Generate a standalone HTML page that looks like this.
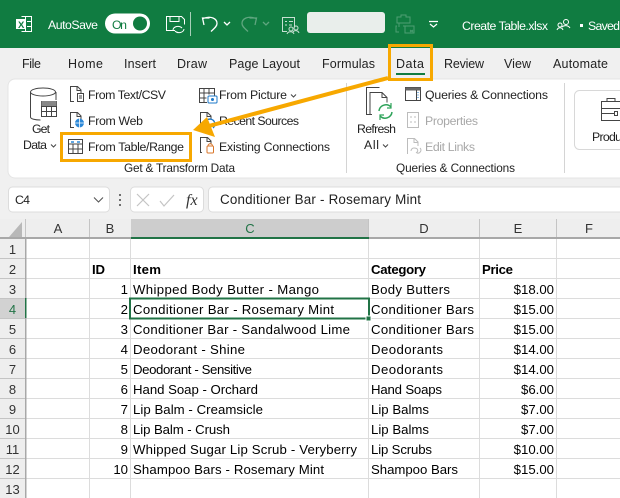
<!DOCTYPE html>
<html><head><meta charset="utf-8"><style>
html,body{margin:0;padding:0;background:#fff;width:620px;height:498px;overflow:hidden}
svg{display:block}
text{font-family:"Liberation Sans",sans-serif;font-size:12.3px;fill:#222;white-space:pre}
.t text{fill:#fff}
.cell text{fill:#000;font-size:13.2px}
.hd text{font-size:13px;fill:#333}
.tab text{font-size:12.5px}
.f{font-size:13.400px}
.b{font-weight:bold}
.g{fill:#a8a8a8}
.i{fill:none;stroke:#444;stroke-width:1}
</style></head><body>
<svg xmlns="http://www.w3.org/2000/svg" width="620" height="498" viewBox="0 0 620 498">
<rect width="620" height="220" fill="#f0f0f0"/>
<rect width="620" height="48" fill="#107c41"/>
<!-- title bar -->
<g fill="none" stroke="#fff" stroke-width="1">
<path d="M21.500 16.500h10v15h-10M25.500 16.500v15M27 21.500h4.500M27 26.500h4.500"/>
</g>
<rect x="16" y="19" width="10" height="10" fill="#fff"/>
<text x="18" y="28" style="font-size:9.500px;font-weight:bold;fill:#107c41">X</text>
<g class="t">
<text x="48" y="29" textLength="50" lengthAdjust="spacing">AutoSave</text>
<text x="462" y="30" textLength="86" lengthAdjust="spacing">Create Table.xlsx</text>
<text x="588" y="30" textLength="32" lengthAdjust="spacing">Saved</text>
</g>
<rect x="105" y="13.500" width="45" height="20" rx="10" fill="#fff"/>
<circle cx="140" cy="23.500" r="7" fill="#107c41"/>
<text x="112" y="29" textLength="15" lengthAdjust="spacing" style="fill:#107c41">On</text>
<g fill="none" stroke="#fff" stroke-width="1">
<path d="M175 30.500h-8.500v-14h15l3 3v5M170 16.500v5h9v-5"/>
<path d="M173 30a5 4 0 0 1 9-2M184 29a5 4 0 0 1-9 2"/>
</g>
<rect x="190" y="12" width="1" height="24" fill="#a8cfb8"/>
<g fill="none" stroke="#fff" stroke-width="1.300">
<path d="M204 25l-1.500-7 7 0M203 18.500c8-3 14 0 14 5 0 3-3 5-6 8"/>
<path d="M224 22l3 3 3-3"/>
</g>
<g fill="none" stroke="#5fa67f" stroke-width="1.300">
<path d="M255 25l1.500-7-7 0M256 18.500c-8-3-14 0-14 5 0 3 3 5 6 8"/>
<path d="M263 22l3 3 3-3"/>
</g>
<g fill="none" stroke="#c7e0d2" stroke-width="1">
<path d="M287 31.500h-4.500v-14h12v10M285 21.500h2M289 21.500h4M285 25h2M289 25h3"/>
<circle cx="291" cy="29" r="2"/><circle cx="296" cy="28" r="2"/><path d="M287 34c1-3 6-3 7 0M293 32c1-2 5-2 6 1"/>
</g>
<rect x="307" y="12" width="78" height="21" rx="3" fill="#e9eeeb"/>
<g fill="none" stroke="#4e9e73" stroke-width="1">
<path d="M397 23v-6h4v-2h5v2h4v6zM397 26h-1v6h3M403 26h11v7h-9v-7M399 23v4"/>
<path d="M410 30l3 2M413 30l-3 2"/>
</g>
<path d="M429 21.500h9M430 24l3.500 3 3.500-3" fill="none" stroke="#fff" stroke-width="1.200"/>
<g fill="none" stroke="#fff" stroke-width="1">
<circle cx="566" cy="22" r="2.500"/><circle cx="560" cy="25" r="2"/><path d="M557 30c1-3 5-3 6 0M562 27c2-2 6-2 8 1"/>
</g>
<rect x="580" y="24" width="3" height="3" fill="#fff"/>
<!-- tabs -->
<g class="tab">
<text x="22" y="68" textLength="19" lengthAdjust="spacing">File</text>
<text x="68" y="68" textLength="35" lengthAdjust="spacing">Home</text>
<text x="124" y="68" textLength="32" lengthAdjust="spacing">Insert</text>
<text x="177" y="68" textLength="30" lengthAdjust="spacing">Draw</text>
<text x="229" y="68" textLength="71" lengthAdjust="spacing">Page Layout</text>
<text x="322" y="68" textLength="53" lengthAdjust="spacing">Formulas</text>
<text x="396" y="68" textLength="28" lengthAdjust="spacing">Data</text>
<text x="444" y="68" textLength="40" lengthAdjust="spacing">Review</text>
<text x="504" y="68" textLength="27" lengthAdjust="spacing">View</text>
<text x="553" y="68" textLength="55" lengthAdjust="spacing">Automate</text>
</g>
<rect x="396" y="73" width="29" height="2" fill="#107c41"/>
<!-- ribbon -->
<rect x="8" y="79" width="640" height="99" rx="7" fill="#fff" stroke="#e4e4e4"/>
<rect x="346" y="83" width="1" height="90" fill="#d4d4d4"/>
<rect x="564" y="83" width="1" height="90" fill="#d4d4d4"/>
<rect x="574.500" y="90.500" width="70" height="59" rx="5" fill="#fff" stroke="#d8d8d8"/>
<!-- Get Data icon -->
<g class="i">
<path d="M30.500 92v25c0 2 5 3 10 3M56 92v8"/>
<ellipse cx="43" cy="92" rx="12.500" ry="4"/>
<rect x="41.500" y="101.500" width="15" height="15" fill="#fff"/>
<path d="M41.500 106.500h15M41.500 111.500h15M46.500 101.500v15M51.500 101.500v15"/>
</g>
<rect x="41.500" y="101" width="15" height="5" fill="#888"/>
<text x="32" y="133" textLength="18" lengthAdjust="spacing">Get</text>
<text x="23" y="149" textLength="24" lengthAdjust="spacing">Data</text>
<path d="M51 144.500l2.500 2.500 2.500-2.500" fill="none" stroke="#444"/>
<!-- From Text -->
<g class="i">
<path d="M74 101.500h-3.500v-15h7l3.500 3.500v3M77 86.500v4h4"/>
<rect x="77.500" y="93.500" width="6" height="8"/>
<path d="M79 96h3M79 98h3"/>
<path d="M74 127.500h-3.500v-15h7l3.500 3.500v3M77 112.500v4h4"/>
</g>
<circle cx="79.500" cy="123" r="4.500" fill="#2b88d8"/>
<path d="M75 123h9M79.500 118.500v9" stroke="#fff" stroke-width=".8"/>
<text x="88" y="99" textLength="78" lengthAdjust="spacing">From Text/CSV</text>
<text x="88" y="125" textLength="55" lengthAdjust="spacing">From Web</text>
<!-- From table -->
<g class="i">
<rect x="68.500" y="139.500" width="14" height="14"/>
<path d="M68.500 144h14M68.500 149h14M73 144v9.500M78 144v9.500"/>
</g>
<path d="M71 142h3M77 142h3" stroke="#2b88d8" stroke-width="1.500"/>
<text x="88" y="151" textLength="96" lengthAdjust="spacing">From Table/Range</text>
<!-- From picture -->
<g class="i">
<path d="M207 102.500h-7.500v-14h15v7M199.500 93h15M199.500 98h7M204 88.500v14M209 88.500v6"/>
</g>
<rect x="208" y="96" width="9" height="7" rx="1" fill="none" stroke="#1e78c8"/>
<circle cx="212.500" cy="99.500" r="1.500" fill="#1e78c8"/>
<text x="219" y="99" textLength="68" lengthAdjust="spacing">From Picture</text>
<path d="M291 94.500l2.500 2.500 2.500-2.500" fill="none" stroke="#444"/>
<g class="i">
<path d="M204 127.500h-3.500v-15h7l3.500 3.500v3M207 112.500v4h4"/>
<path d="M202 152.500h-1.500v-15h7l3.500 3.500v3M207 137.500v4h4"/>
</g>
<path d="M205 125a5 5 0 1 1 8 3" fill="none" stroke="#1e78c8" stroke-width="1.300"/>
<rect x="207" y="146" width="6.500" height="7" rx="1" fill="none" stroke="#d9762a"/>
<path d="M208 146c0-3 4.500-3 4.500 0" fill="none" stroke="#d9762a"/>
<text x="219" y="125" textLength="80" lengthAdjust="spacing">Recent Sources</text>
<text x="219" y="151" textLength="111" lengthAdjust="spacing">Existing Connections</text>
<text x="124" y="172" textLength="111" lengthAdjust="spacing" style="font-size:11.800px">Get &amp; Transform Data</text>
<!-- Refresh -->
<g class="i">
<path d="M370 114.500h-3.500v-27h13M372 114.500h-2V92.500h12l5 5v5M382 92.500v5h5"/>
</g>
<path d="M379 111a7 7 0 0 1 12-4M392 112a7 7 0 0 1-12 4" fill="none" stroke="#2fa35a" stroke-width="1.500"/>
<path d="M391 103v5h-4M380 120v-5h4" fill="none" stroke="#2fa35a" stroke-width="1.200"/>
<text x="357" y="133" textLength="39" lengthAdjust="spacing">Refresh</text>
<text x="364" y="149" textLength="15" lengthAdjust="spacing">All</text>
<path d="M383 144.500l2.500 2.500 2.500-2.500" fill="none" stroke="#444"/>
<!-- Queries -->
<rect x="405.500" y="87.500" width="15" height="13" fill="none" stroke="#444"/>
<rect x="405.500" y="87.500" width="15" height="3" fill="#666"/>
<path d="M416.500 90v10" stroke="#444"/>
<path d="M418 92v1M418 94.500v1M418 97v1" stroke="#1e78c8" stroke-width="1"/>
<g fill="none" stroke="#bcbcbc">
<rect x="407.500" y="112.500" width="11" height="15"/>
<path d="M410 117h2M414 117h2M410 122h2M414 122h2"/>
<path d="M408 153.500h-.5v-15h7l3.500 3.500v4M414 138.500v4h4"/>
<path d="M411 151a3 3 0 0 1 3-3c4 0 5 3 2 5M420 148a3 3 0 0 1-3 5"/>
</g>
<text x="425" y="99" textLength="123" lengthAdjust="spacing">Queries &amp; Connections</text>
<text x="425" y="125" textLength="53" lengthAdjust="spacing" class="g">Properties</text>
<text x="425" y="151" textLength="50" lengthAdjust="spacing" class="g">Edit Links</text>
<text x="396" y="172" textLength="119" lengthAdjust="spacing" style="font-size:11.800px">Queries &amp; Connections</text>
<!-- product icon -->
<g class="i">
<path d="M601.500 108.500h19v-7h-19zM601.500 113.500v7h19M601.500 107.500v13M601.500 113.500h13"/>
<path d="M607 101.500v-3h8v3"/>
<rect x="614.500" y="111.500" width="3" height="4"/>
</g>
<text x="592" y="141" textLength="30" lengthAdjust="spacing">Produ</text>
<!-- formula bar -->
<rect x="8.500" y="187" width="101" height="25" rx="4" fill="#fff" stroke="#dcdcdc"/>
<text x="15" y="204" textLength="15" lengthAdjust="spacing">C4</text>
<path d="M94 197.500l4.500 4.500 4.500-4.500" fill="none" stroke="#555" stroke-width="1.100"/>
<path d="M120 194v2M120 199v2M120 204v2" stroke="#444" stroke-width="1.500"/>
<rect x="130.500" y="187" width="73" height="25" rx="4" fill="#fff" stroke="#dcdcdc"/>
<path d="M137 194l12 12M149 194l-12 12M160 201l4 5 10-11" fill="none" stroke="#c4c4c4" stroke-width="1.200"/>
<text x="186" y="205" style="font-family:'Liberation Serif',serif;font-style:italic;font-size:16px;fill:#333">fx</text>
<rect x="208.500" y="187" width="420" height="25" rx="4" fill="#fff" stroke="#dcdcdc"/>
<text class="f" x="220" y="204" textLength="201" lengthAdjust="spacing">Conditioner Bar - Rosemary Mint</text>
<!-- sheet -->
<rect y="219" width="620" height="279" fill="#fff"/>
<rect y="219" width="620" height="19" fill="#eeeeee"/>
<rect x="0" y="238" width="25" height="260" fill="#eeeeee"/>
<rect x="131" y="219" width="238" height="19" fill="#cdcdcd"/>
<rect x="0" y="298" width="25" height="20" fill="#d2d2d2"/>
<path d="M22 222v15H9z" fill="#b8b8b8"/>
<g fill="#dcdcdc">
<rect x="26" y="258" width="594" height="1"/><rect x="26" y="278" width="594" height="1"/><rect x="26" y="298" width="594" height="1"/><rect x="26" y="318" width="594" height="1"/><rect x="26" y="338" width="594" height="1"/><rect x="26" y="358" width="594" height="1"/><rect x="26" y="378" width="594" height="1"/><rect x="26" y="398" width="594" height="1"/><rect x="26" y="418" width="594" height="1"/><rect x="26" y="438" width="594" height="1"/><rect x="26" y="458" width="594" height="1"/><rect x="26" y="478" width="594" height="1"/>
<rect x="89" y="238" width="1" height="260"/><rect x="130" y="238" width="1" height="260"/><rect x="368" y="238" width="1" height="260"/><rect x="479" y="238" width="1" height="260"/><rect x="556" y="238" width="1" height="260"/>
</g>
<g fill="#c4c4c4">
<rect x="0" y="258" width="25" height="1"/><rect x="0" y="278" width="25" height="1"/><rect x="0" y="298" width="25" height="1"/><rect x="0" y="318" width="25" height="1"/><rect x="0" y="338" width="25" height="1"/><rect x="0" y="358" width="25" height="1"/><rect x="0" y="378" width="25" height="1"/><rect x="0" y="398" width="25" height="1"/><rect x="0" y="418" width="25" height="1"/><rect x="0" y="438" width="25" height="1"/><rect x="0" y="458" width="25" height="1"/><rect x="0" y="478" width="25" height="1"/>
<rect x="25" y="219" width="1" height="19"/><rect x="89" y="219" width="1" height="19"/><rect x="368" y="219" width="1" height="19"/><rect x="479" y="219" width="1" height="19"/><rect x="556" y="219" width="1" height="19"/>
</g>
<rect x="0" y="237" width="620" height="2" fill="#a8a8a8"/>
<rect x="25" y="238" width="1.500" height="260" fill="#a8a8a8"/>
<rect x="131" y="237" width="238" height="2" fill="#217346"/>
<rect x="25" y="298" width="1.500" height="20" fill="#217346"/>
<g text-anchor="middle" class="hd">
<text x="58" y="233">A</text><text x="110" y="233">B</text><text x="250" y="233" style="fill:#217346">C</text><text x="424" y="233">D</text><text x="518" y="233">E</text><text x="589" y="233">F</text>
<text x="12.500" y="254">1</text><text x="12.500" y="274">2</text><text x="12.500" y="294">3</text><text x="12.500" y="314" style="fill:#217346">4</text><text x="12.500" y="334">5</text><text x="12.500" y="354">6</text><text x="12.500" y="374">7</text><text x="12.500" y="394">8</text><text x="12.500" y="414">9</text><text x="12.500" y="434">10</text><text x="12.500" y="454">11</text><text x="12.500" y="474">12</text><text x="12.500" y="494">13</text>
</g>
<g class="cell">
<text class="b" x="92" y="274" textLength="13" lengthAdjust="spacing">ID</text>
<text class="b" x="133" y="274" textLength="28" lengthAdjust="spacing">Item</text>
<text class="b" x="371" y="274" textLength="55" lengthAdjust="spacing">Category</text>
<text class="b" x="482" y="274" textLength="31" lengthAdjust="spacing">Price</text>
<g text-anchor="end">
<text x="128" y="294">1</text><text x="128" y="314">2</text><text x="128" y="334">3</text><text x="128" y="354">4</text><text x="128" y="374">5</text><text x="128" y="394">6</text><text x="128" y="414">7</text><text x="128" y="434">8</text><text x="128" y="454">9</text><text x="128" y="474">10</text>
</g>
<text x="133" y="294" textLength="186" lengthAdjust="spacing">Whipped Body Butter - Mango</text>
<text x="133" y="314" textLength="201" lengthAdjust="spacing">Conditioner Bar - Rosemary Mint</text>
<text x="133" y="334" textLength="217" lengthAdjust="spacing">Conditioner Bar - Sandalwood Lime</text>
<text x="133" y="354" textLength="112" lengthAdjust="spacing">Deodorant - Shine</text>
<text x="133" y="374" textLength="119" lengthAdjust="spacing">Deodorant - Sensitive</text>
<text x="133" y="394" textLength="125" lengthAdjust="spacing">Hand Soap - Orchard</text>
<text x="133" y="414" textLength="130" lengthAdjust="spacing">Lip Balm - Creamsicle</text>
<text x="133" y="434" textLength="97" lengthAdjust="spacing">Lip Balm - Crush</text>
<text x="133" y="454" textLength="224" lengthAdjust="spacing">Whipped Sugar Lip Scrub - Veryberry</text>
<text x="133" y="474" textLength="191" lengthAdjust="spacing">Shampoo Bars - Rosemary Mint</text>
<text x="371" y="294" textLength="79" lengthAdjust="spacing">Body Butters</text>
<text x="371" y="314" textLength="103" lengthAdjust="spacing">Conditioner Bars</text>
<text x="371" y="334" textLength="103" lengthAdjust="spacing">Conditioner Bars</text>
<text x="371" y="354" textLength="72" lengthAdjust="spacing">Deodorants</text>
<text x="371" y="374" textLength="72" lengthAdjust="spacing">Deodorants</text>
<text x="371" y="394" textLength="71" lengthAdjust="spacing">Hand Soaps</text>
<text x="371" y="414" textLength="58" lengthAdjust="spacing">Lip Balms</text>
<text x="371" y="434" textLength="58" lengthAdjust="spacing">Lip Balms</text>
<text x="371" y="454" textLength="61" lengthAdjust="spacing">Lip Scrubs</text>
<text x="371" y="474" textLength="87" lengthAdjust="spacing">Shampoo Bars</text>
<g text-anchor="end">
<text x="554" y="294">$18.00</text><text x="554" y="314">$15.00</text><text x="554" y="334">$15.00</text><text x="554" y="354">$14.00</text><text x="554" y="374">$14.00</text><text x="554" y="394">$6.00</text><text x="554" y="414">$7.00</text><text x="554" y="434">$7.00</text><text x="554" y="454">$10.00</text><text x="554" y="474">$15.00</text>
</g>
</g>
<rect x="130" y="298.500" width="239" height="20" fill="none" stroke="#217346" stroke-width="2"/>
<rect x="366" y="316" width="5" height="5" fill="#217346" stroke="#fff"/>
<!-- orange annotations -->
<g fill="none" stroke="#f7a800" stroke-width="3">
<rect x="389.500" y="45.500" width="42" height="34"/>
<rect x="61.500" y="133.500" width="129" height="27"/>
</g>
<path d="M388 78L205 127" stroke="#f7a800" stroke-width="4" fill="none"/>
<path d="M193 130L207 117L215 137Z" fill="#f7a800"/>
</svg>
</body></html>
